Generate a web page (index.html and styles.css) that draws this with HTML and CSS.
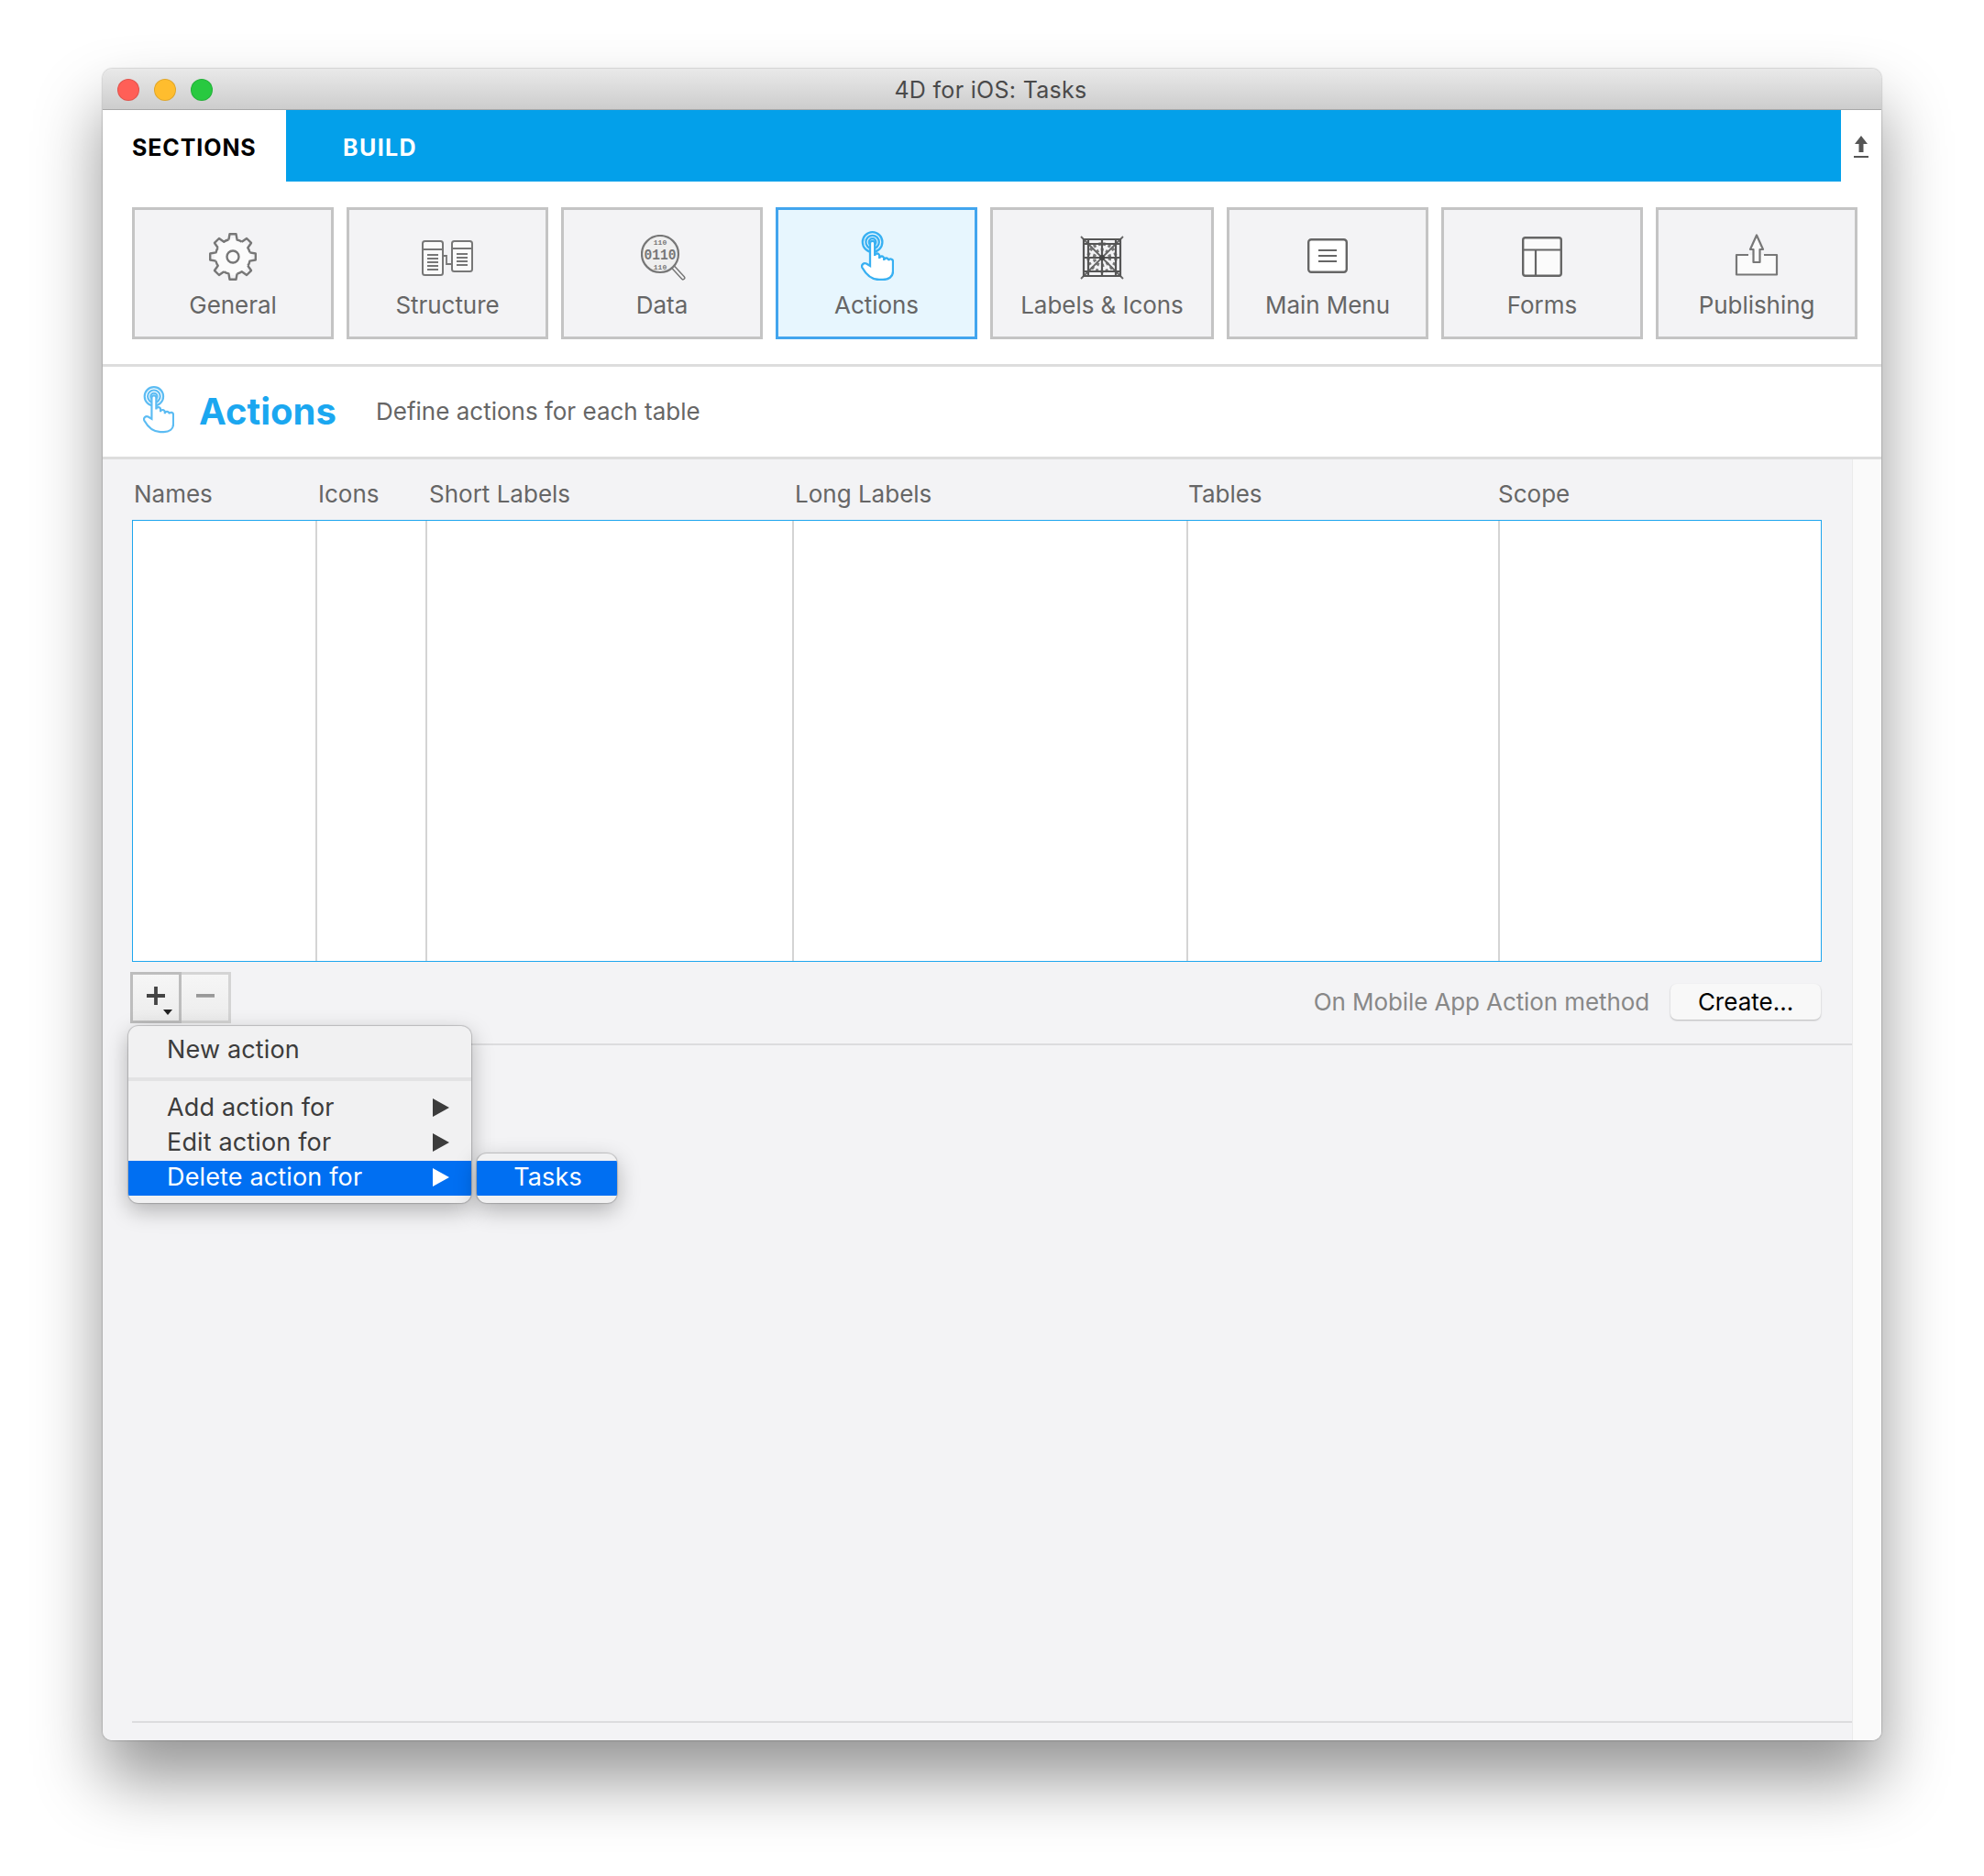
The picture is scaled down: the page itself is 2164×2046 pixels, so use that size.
FILE: index.html
```html
<!DOCTYPE html>
<html lang="en">
<head>
  <meta charset="UTF-8" />
  <title>4D for iOS: Tasks</title>
  <link rel="stylesheet" href="styles.css">
</head>
<body>
  <svg class="defs" width="0" height="0">
    <symbol id="hand" viewBox="0 0 36 54">
      <circle cx="12.6" cy="12" r="10.800" />
      <circle cx="12.6" cy="12" r="7.200" />
      <circle cx="12.6" cy="12" r="3.800" />
      <path class="hand-fill" d="M10 38V13.500a2.600 2.600 0 0 1 5.200 0V27a2.500 2.500 0 0 1 5 0v3a2.500 2.500 0 0 1 5 0v2a2.500 2.500 0 0 1 5 0a2.500 2.500 0 0 1 4.800 1V44C35 50 30 53 24 53H20C12 53 6 48 1.500 40C0 37 3 34 6 35.500L10 38Z" />
    </symbol>
  </svg>

  <div class="window">
    <div class="titlebar">
      <div class="lights">
        <span class="light red"></span>
        <span class="light yellow"></span>
        <span class="light green"></span>
      </div>
      <div class="title">4D for iOS: Tasks</div>
    </div>

    <div class="tabs">
      <div class="tab tab-sections">SECTIONS</div>
      <div class="tab tab-build">BUILD</div>
      <div class="tab-icon">
        <svg width="16" height="24" viewBox="0 0 16 24"><path d="M8 0L15 9H10.500V18H5.500V9H1Z" fill="#555"/><rect y="22" width="16" height="2" fill="#555"/></svg>
      </div>
    </div>

    <div class="tiles">
      <div class="tile">
        <svg class="icon" width="52" height="52" viewBox="0 0 52 52">
          <circle cx="26" cy="26" r="20" fill="#fbfbfb"/>
          <g fill="none" stroke="#777" stroke-width="2.400" stroke-linejoin="round">
            <path id="tooth" d="M21.400 7.600L22.500 1.200H29.500L30.600 7.600Q33.500 8 35.800 9.700"/>
            <use href="#tooth" transform="rotate(45 26 26)"/>
            <use href="#tooth" transform="rotate(90 26 26)"/>
            <use href="#tooth" transform="rotate(135 26 26)"/>
            <use href="#tooth" transform="rotate(180 26 26)"/>
            <use href="#tooth" transform="rotate(225 26 26)"/>
            <use href="#tooth" transform="rotate(270 26 26)"/>
            <use href="#tooth" transform="rotate(315 26 26)"/>
            <circle cx="26" cy="26" r="6.500"/>
          </g>
        </svg>
        <div class="tile-label">General</div>
      </div>
      <div class="tile">
        <svg class="icon" width="56" height="40" viewBox="0 0 56 40">
          <g fill="#fbfbfb" stroke="#777" stroke-width="2">
            <rect x="1" y="1" width="22" height="37" rx="2.500"/>
            <rect x="33" y="1" width="22" height="33" rx="2.500"/>
          </g>
          <path d="M1 10H23M33 9H55M6 16H18M6 20H18M6 24H18M6 28H18M6 32H18M38 15H50M38 19H50M38 23H50M38 27H50M23 17H27V26H33V17" fill="none" stroke="#777" stroke-width="1.800"/>
        </svg>
        <div class="tile-label">Structure</div>
      </div>
      <div class="tile">
        <svg class="icon" width="50" height="50" viewBox="0 0 50 50">
          <line x1="34" y1="34" x2="46" y2="47" stroke="#777" stroke-width="5" stroke-linecap="round"/>
          <line x1="34" y1="34" x2="46" y2="47" stroke="#f3f3f5" stroke-width="2" stroke-linecap="round"/>
          <circle cx="21" cy="21" r="20" fill="#efefef" stroke="#777" stroke-width="2.200"/>
          <g class="bits">
            <text class="bits-small" x="21" y="11" text-anchor="middle">110</text>
            <text x="21" y="26.500" text-anchor="middle" textLength="35" lengthAdjust="spacingAndGlyphs">0110</text>
            <text class="bits-small" x="21" y="37.500" text-anchor="middle">110</text>
          </g>
        </svg>
        <div class="tile-label">Data</div>
      </div>
      <div class="tile tile-active">
        <svg class="icon hand tile-hand" width="36" height="54"><use href="#hand"/></svg>
        <div class="tile-label">Actions</div>
      </div>
      <div class="tile tile-wide">
        <svg class="icon" width="48" height="48" viewBox="0 0 48 48">
          <circle cx="24" cy="24" r="15" fill="none" stroke="#777" stroke-width="3.400" stroke-dasharray="3 2.500"/>
          <circle cx="24" cy="24" r="8.500" fill="none" stroke="#777" stroke-width="3.400" stroke-dasharray="3 2.500"/>
          <path d="M1 1L47 47M47 1L1 47" stroke="#666" stroke-width="1.800"/>
          <path d="M4 4H44V44H4ZM24 4V44M4 24H44M9 4V44M39 4V44M4 9H44M4 39H44" fill="none" stroke="#555" stroke-width="2.200"/>
          <circle cx="24" cy="24" r="3" fill="#444"/>
        </svg>
        <div class="tile-label">Labels &amp; Icons</div>
      </div>
      <div class="tile">
        <svg class="icon" width="44" height="38" viewBox="0 0 44 38">
          <rect x="1.200" y="1.200" width="41.600" height="35.600" rx="3" fill="#fff" stroke="#666" stroke-width="2.400"/>
          <path d="M12 13H32M12 19H32M12 25H32" stroke="#666" stroke-width="2.200"/>
        </svg>
        <div class="tile-label">Main Menu</div>
      </div>
      <div class="tile">
        <svg class="icon" width="44" height="44" viewBox="0 0 44 44">
          <rect x="1.200" y="1.200" width="41.600" height="41.600" rx="2.500" fill="#fbfbfb" stroke="#666" stroke-width="2.400"/>
          <path d="M1 14.500H43M15 14.500V43" stroke="#666" stroke-width="2.200"/>
        </svg>
        <div class="tile-label">Forms</div>
      </div>
      <div class="tile">
        <svg class="icon" width="48" height="46" viewBox="0 0 48 46">
          <path d="M15 23H2V44.500H46V23H32" fill="#fbfbfb" stroke="#777" stroke-width="2.200" stroke-linejoin="round"/>
          <path d="M24 1.500L31 17H27.500V31H20.500V17H17Z" fill="#fbfbfb" stroke="#777" stroke-width="2.200" stroke-linejoin="round"/>
        </svg>
        <div class="tile-label">Publishing</div>
      </div>
    </div>

    <div class="page-head">
      <svg class="hand head-hand" width="34" height="53"><use href="#hand"/></svg>
      <div class="page-title">Actions</div>
      <div class="page-sub">Define actions for each table</div>
    </div>

    <div class="content">
      <div class="panel">
        <div class="cols col-heads">
          <div>Names</div>
          <div>Icons</div>
          <div class="head-short">Short Labels</div>
          <div>Long Labels</div>
          <div class="head-tables">Tables</div>
          <div class="head-scope">Scope</div>
        </div>
        <div class="cols grid">
          <div></div><div></div><div></div><div></div><div></div><div></div>
        </div>

        <div class="toolbar">
          <div class="btn-pair">
            <div class="btn-add">
              <svg width="20" height="20" viewBox="0 0 20 20"><path d="M10 0V20M0 10H20" stroke="#444" stroke-width="3.800"/></svg>
              <span class="caret"></span>
            </div>
            <div class="btn-del">
              <svg width="20" height="4" viewBox="0 0 20 4"><rect width="20" height="3.800" fill="#999"/></svg>
            </div>
          </div>
          <div class="method">On Mobile App Action method</div>
          <div class="btn-create">Create...</div>
        </div>
        <div class="rule"></div>
        <div class="spacer"></div>
        <div class="rule"></div>

        <div class="menu">
          <div class="menu-item">New action</div>
          <div class="menu-sep"></div>
          <div class="menu-item">Add action for<span class="arrow"></span></div>
          <div class="menu-item">Edit action for<span class="arrow"></span></div>
          <div class="menu-item selected">Delete action for<span class="arrow"></span></div>
        </div>
        <div class="menu submenu">
          <div class="menu-item selected">Tasks</div>
        </div>
      </div>
      <div class="strip"></div>
    </div>
  </div>
</body>
</html>
```

FILE: styles.css
```css
html, body {
  margin: 0;
  height: 100%;
}
body {
  font-family: Inter, "Noto Sans", sans-serif;
  background: #fff;
  color: #666;
  padding: 75px 0 0 112px;
  box-sizing: border-box;
  overflow: hidden;
}
.defs {
  position: absolute;
}
.window {
  display: flex;
  flex-direction: column;
  width: 1940px;
  height: 1823px;
  background: #fff;
  border-radius: 10px;
  overflow: hidden;
  box-shadow: 0 0 2px rgba(0, 0, 0, 0.45), 0 42px 72px rgba(0, 0, 0, 0.42);
}

/* title bar */
.titlebar {
  position: relative;
  display: flex;
  align-items: center;
  justify-content: center;
  height: 45px;
  padding: 2px 3px 0 0;
  box-sizing: border-box;
  background: linear-gradient(to bottom, #e9e9e9, #cdcdcd);
  border-bottom: 1px solid #a9a9a9;
}
.lights {
  position: absolute;
  left: 16px;
  top: 11px;
  display: flex;
  gap: 16px;
}
.light {
  width: 24px;
  height: 24px;
  box-sizing: border-box;
  border-radius: 50%;
  border: 1px solid rgba(0, 0, 0, 0.12);
}
.red { background: #ff5f57; }
.yellow { background: #ffbd2e; }
.green { background: #28c940; }
.title {
  font-size: 25px;
  letter-spacing: 0.3px;
  color: #4a4a4a;
}

/* tabs */
.tabs {
  display: flex;
  height: 79px;
  border-bottom: 1px solid #fff;
  box-sizing: border-box;
}
.tab {
  display: flex;
  align-items: center;
  padding-top: 3px;
  font-size: 25px;
  font-weight: 700;
  letter-spacing: 0.9px;
}
.tab-sections {
  width: 200px;
  padding-left: 32px;
  box-sizing: border-box;
  color: #000;
}
.tab-build {
  width: 1696px;
  padding-left: 62px;
  box-sizing: border-box;
  background: #03a0ea;
  color: #fff;
  letter-spacing: 1.4px;
}
.tab-icon {
  flex: 1;
  padding: 28px 0 0 14px;
}

/* section tiles */
.tiles {
  display: flex;
  gap: 14px;
  padding: 27px 0 27px 32px;
}
.tile {
  display: flex;
  flex-direction: column;
  align-items: center;
  justify-content: center;
  width: 220px;
  height: 144px;
  box-sizing: border-box;
  position: relative;
  background: #f3f3f5;
  border: 3px solid #c4c4c4;
}
.tile-wide {
  width: 244px;
}
.tile-active {
  background: #e7f6fe;
  border-color: #42a5ee;
}
.icon {
  position: absolute;
  top: 24px;
}
.tile-label {
  margin-top: 68px;
  font-size: 26px;
  letter-spacing: -0.05px;
  color: #666;
}
.tile:nth-child(1) .icon { top: 25px; }
.tile:nth-child(2) .icon { top: 33px; }
.tile:nth-child(3) .icon { top: 27px; left: 84px; }
.tile:nth-child(4) .icon { top: 23px; left: 90px; }
.tile:nth-child(5) .icon { top: 28px; }
.tile:nth-child(6) .icon { top: 31px; }
.tile:nth-child(7) .icon { top: 29px; }
.tile:nth-child(8) .icon { top: 26px; }
.bits text {
  font-family: "Liberation Mono", monospace;
  font-size: 16px;
  font-weight: 700;
  fill: #777;
}
.bits .bits-small {
  font-size: 8px;
}
.hand {
  color: #38b0f2;
}
#hand circle, #hand path {
  stroke: currentColor;
  stroke-width: 2.300;
}
#hand circle {
  fill: none;
}
.hand-fill {
  fill: #fff;
}

/* page heading */
.page-head {
  display: flex;
  align-items: center;
  flex: none;
  height: 98px;
  padding: 0 0 2px 44px;
  box-sizing: content-box;
  height: 96px;
  border-top: 3px solid #ddd;
}
.head-hand {
  color: #5cbcf3;
  margin: 0 27px 3px 0;
}
.page-title {
  width: 193px;
  font-size: 40px;
  font-weight: 700;
  color: #1ba7f0;
}
.page-sub {
  font-size: 26px;
}

/* table area */
.content {
  display: flex;
  flex: 1;
  border-top: 3px solid #ddd;
  background: #f3f3f5;
}
.panel {
  position: relative;
  display: flex;
  flex-direction: column;
  width: 1908px;
  box-sizing: border-box;
  padding: 0 0 19px 32px;
}
.strip {
  flex: 1;
  background: #fafafa;
  border-left: 1px solid #ebebeb;
}
.cols {
  display: grid;
  grid-template-columns: 201px 120px 400px 430px 340px 1fr;
  width: 1843px;
  box-sizing: border-box;
}
.col-heads {
  height: 66px;
  align-items: center;
  padding-top: 9px;
  font-size: 26px;
}
.col-heads div {
  padding-left: 2px;
}
.col-heads .head-short {
  padding-left: 3px;
}
.col-heads .head-tables {
  padding-left: 1px;
}
.col-heads .head-scope {
  padding-left: 0;
  margin-left: -1px;
}
.grid {
  height: 482px;
  background: #fff;
  border: 1px solid #1ea6ee;
}
.grid div {
  border-right: 2px solid #d4d4d4;
}
.grid div:last-child {
  border-right: none;
}

/* toolbar under the table */
.toolbar {
  display: flex;
  align-items: flex-start;
  height: 89px;
  padding-top: 11px;
  box-sizing: border-box;
  width: 1842px;
}
.btn-pair {
  display: flex;
  margin-left: -2px;
}
.btn-add, .btn-del {
  position: relative;
  display: flex;
  align-items: center;
  justify-content: center;
  height: 56px;
  padding-bottom: 4px;
  box-sizing: border-box;
  background: linear-gradient(to bottom, #f6f6f6, #ececec);
}
.btn-add {
  width: 56px;
  border: 3px solid #bdbdbd;
}
.btn-del {
  width: 54px;
  border: 3px solid #d4d4d4;
  border-left: none;
}
.caret {
  position: absolute;
  right: 7px;
  bottom: 6px;
  border-left: 5px solid transparent;
  border-right: 5px solid transparent;
  border-top: 6px solid #222;
}
.method {
  margin: 17px 0 0 auto;
  font-size: 26px;
  letter-spacing: -0.1px;
  color: #888;
}
.btn-create {
  display: flex;
  align-items: center;
  justify-content: center;
  width: 164px;
  height: 39px;
  margin: 13px 0 0 23px;
  font-size: 26px;
  color: #000;
  background: #f8f8f8;
  border-radius: 7px;
  box-shadow: 0 1px 2px rgba(0, 0, 0, 0.25);
}
.rule {
  width: 1876px;
  height: 2px;
  flex: none;
  background: #dcdcde;
}
.spacer {
  flex: 1;
}

/* popup menus */
.menu {
  position: absolute;
  left: 28px;
  top: 618px;
  width: 374px;
  height: 193px;
  padding-top: 8px;
  box-sizing: border-box;
  background: #f1f1f2;
  border-radius: 11px;
  box-shadow: 0 0 1px 1px rgba(0, 0, 0, 0.18), 0 8px 24px rgba(0, 0, 0, 0.28);
  overflow: hidden;
}
.menu-item {
  position: relative;
  display: flex;
  align-items: center;
  height: 38px;
  padding: 0 0 3px 42px;
  box-sizing: border-box;
  font-size: 27px;
  letter-spacing: 0.15px;
  color: #3c3c3c;
}
.menu-sep {
  height: 4px;
  margin: 10px 0 11px;
  background: #e3e3e4;
}
.selected {
  background: #006ff2;
  color: #fff;
}
.arrow {
  position: absolute;
  right: 24px;
  top: 8px;
  border-top: 10px solid transparent;
  border-bottom: 10px solid transparent;
  border-left: 18px solid #3c3c3c;
}
.selected .arrow {
  border-left-color: #fff;
}
.submenu {
  left: 407.500px;
  top: 757px;
  width: 153px;
  height: 54px;
}
.submenu .menu-item {
  justify-content: center;
  padding-left: 3px;
}
```
